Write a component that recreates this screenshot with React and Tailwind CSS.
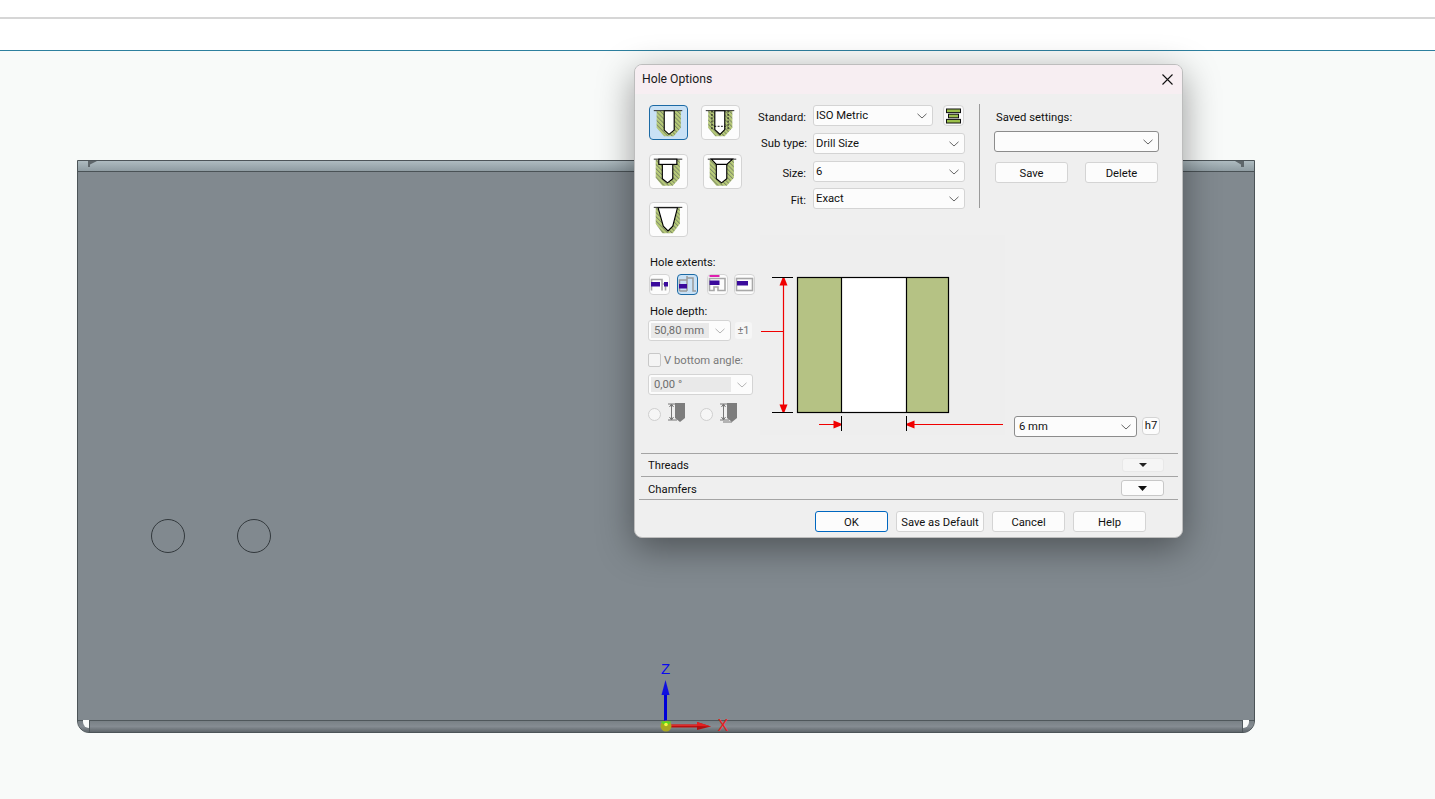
import React from "react";

const font = { fontFamily: 'Roboto, "Noto Sans", sans-serif' };

function Chevron({ light }) {
  return (
    <svg width="10" height="6" viewBox="0 0 10 6" className="shrink-0">
      <path d="M0.5 0.8 L5 5 L9.5 0.8" fill="none" stroke={light ? "#b4b4b4" : "#666"} strokeWidth="1" />
    </svg>
  );
}

function Select({ value, className = "", dark, disabled }) {
  const border = dark ? "border-[#8c8c8c]" : "border-[#d4d4d4]";
  return (
    <div className={`flex items-center justify-between rounded-[3px] border ${border} bg-[#fcfcfc] pl-[2px] pr-[5px] h-[21px] ${className}`}>
      {disabled ? (
        <span className="flex items-center flex-1 h-[15px] mr-[6px] bg-[#e9e9e9] pl-[3px] text-[#6e6e6e]">{value}</span>
      ) : (
        <span className="pt-px text-[#111]">{value}</span>
      )}
      <Chevron light={disabled} />
    </div>
  );
}

function Btn({ children, className = "" }) {
  return (
    <button className={`flex items-center justify-center h-[21px] pt-[2px] rounded-[3px] border border-[#d4d4d4] bg-[#fcfcfc] text-[#111] ${className}`}>
      {children}
    </button>
  );
}

function HoleBody({ id, body, white, children, top }) {
  return (
    <svg width="39" height="35" viewBox="0 0 39 35" className="block">
      <defs>
        <pattern id={id} width="3.2" height="3.2" patternUnits="userSpaceOnUse" patternTransform="rotate(-45)">
          <rect width="3.2" height="3.2" fill="#b8cc78" />
          <rect width="1" height="3.2" fill="#7d8868" />
        </pattern>
      </defs>
      <polygon points={body} fill={`url(#${id})`} />
      <polygon points={white} fill="#fff" stroke="#000" strokeWidth="1.2" />
      <path d={top} stroke="#222" strokeWidth="1" fill="none" />
      {children}
    </svg>
  );
}

function HoleBtn({ active, className = "", children }) {
  return (
    <div className={`w-[39px] h-[35px] rounded-[4px] border ${active ? "border-[#1c6aa5] bg-[#c9e1f5]" : "border-[#d4d4d4] bg-[#fcfcfc]"} ${className} overflow-hidden flex items-center justify-center`}>
      {children}
    </div>
  );
}

function ExtIcon({ children }) {
  return (
    <svg width="19" height="19" viewBox="0 0 19 19" className="block">
      {children}
    </svg>
  );
}

function ExtBtn({ active, children }) {
  return (
    <div className={`w-[21px] h-[21px] rounded-[4px] border ${active ? "border-[#1c6aa5] bg-[#c9e1f5]" : "border-[#d4d4d4] bg-[#fcfcfc]"} flex items-center justify-center`}>
      {children}
    </div>
  );
}

function Bar({ x, y, w }) {
  return (
    <>
      <rect x={x} y={y} width={w} height="4.5" fill="#3a0a9c" />
      <rect x={x} y={y + 1.3} width={w} height="2" fill="#e020b0" />
    </>
  );
}

function Radio() {
  return <div className="w-[13px] h-[13px] mt-[2px] rounded-full border border-[#cfcfcf] bg-[#f6f6f6] shrink-0" />;
}

function DepthIcon({ wide }) {
  return (
    <svg width="18" height="20" viewBox="0 0 18 20" className="block">
      <polygon points="7,0 17,0 17,15 12,19 7,15" fill="#7d7d7d" />
      <path d="M0 1 H7 M0 17 H9 M3.5 1 V17 M1.5 4 L3.5 1 L5.5 4 M1.5 14 L3.5 17 L5.5 14" stroke="#777" strokeWidth="1" fill="none" />
      {wide && <path d="M3 19 H12" stroke="#777" strokeWidth="1" />}
    </svg>
  );
}

function Diagram() {
  const red = "#f00000";
  return (
    <svg width="245" height="200" viewBox="0 0 245 200" className="block shrink-0 bg-[#eeeeee]">
      <rect x="37.5" y="42.5" width="151" height="135" fill="#b5c284" />
      <rect x="81.5" y="42.5" width="65" height="135" fill="#fff" />
      <rect x="37.5" y="42.5" width="151" height="135" fill="none" stroke="#000" strokeWidth="1.2" />
      <path d="M81.5 42 V178 M146.5 42 V178" stroke="#000" strokeWidth="1.2" />
      <path d="M12 42.5 H33 M12 177.5 H33" stroke="#000" strokeWidth="1" />
      <path d="M23.5 43 V177 M1 96.5 H23.5" stroke={red} strokeWidth="1.2" />
      <polygon points="22.5,43 24.5,43 27.5,50.5 19.5,50.5" fill={red} />
      <polygon points="22.5,177 24.5,177 27.5,169.5 19.5,169.5" fill={red} />
      <path d="M81.5 181 V196 M146.5 181 V196" stroke="#000" strokeWidth="1" />
      <path d="M59 189.5 H81 M147 189.5 H243" stroke={red} strokeWidth="1.2" />
      <polygon points="81,188.5 81,190.5 73.5,193.5 73.5,185.5" fill={red} />
      <polygon points="147,188.5 147,190.5 154.5,193.5 154.5,185.5" fill={red} />
    </svg>
  );
}

function Triad() {
  return (
    <svg width="90" height="80" viewBox="0 0 90 80" className="absolute left-[569px] top-[498px]" style={{ overflow: "visible" }}>
      <text x="14" y="15" fontSize="15" fill="#0a0aee" fontFamily="Liberation Sans, sans-serif">Z</text>
      <text x="70.5" y="72" fontSize="16" fill="#e82020" fontFamily="Liberation Sans, sans-serif">X</text>
      <rect x="17" y="35" width="3" height="33" fill="#0000d8" />
      <polygon points="18.5,21 14.5,36 22.5,36" fill="#1010e0" />
      <rect x="19" y="65.5" width="35" height="3" fill="#b81010" />
      <rect x="19" y="65.5" width="35" height="1.4" fill="#e03030" />
      <polygon points="64,67.5 50,63 50,71" fill="#b01010" />
      <polygon points="64,67.5 50,63 50,67" fill="#e52020" />
      <circle cx="19" cy="67" r="5.5" fill="#a8a820" />
      <path d="M13.5 62.5 H24.5 L19 67.5 Z" fill="#58d820" />
      <circle cx="19" cy="65.5" r="1.8" fill="#f4f440" />
    </svg>
  );
}

function Part() {
  return (
    <div className="relative ml-[77px] mt-[109px] w-[1178px] h-[573px] flex flex-col border border-[#4c5458] rounded-b-[12px] overflow-hidden bg-[#82898f]">
      <div className="h-[11px] bg-gradient-to-b from-[#aebbc0] to-[#8f9ca2] border-b border-[#4a5256] shrink-0" />
      <div className="flex-1 bg-[#81898f]" />
      <div className="h-[12px] shrink-0 border-t border-[#4f575b] bg-gradient-to-b from-[#798186] via-[#858c92] to-[#5f666b]" />
      <svg width="1178" height="10" viewBox="0 0 1178 10" className="absolute left-[-1px] top-[-1px]">
        <polygon points="11,1 20,1 13,4.5 13,7 11,7" fill="#5e666a" />
        <polygon points="1167,1 1158,1 1164,4.5 1164,7 1167,7" fill="#5e666a" />
      </svg>
      <div className="absolute left-[5px] bottom-[4px] w-[6px] h-[8px] bg-[#f8faf9] rounded-bl-[6px]" />
      <div className="absolute right-[5px] bottom-[4px] w-[6px] h-[8px] bg-[#f8faf9] rounded-br-[6px]" />
      <div className="absolute left-[11px] bottom-0 w-px h-[12px] bg-[#4f575b]" />
      <div className="absolute right-[11px] bottom-0 w-px h-[12px] bg-[#4f575b]" />
      <div className="absolute left-[73px] top-[358px] w-[34px] h-[34px] rounded-full border border-[#33393d]" />
      <div className="absolute left-[159px] top-[358px] w-[34px] h-[34px] rounded-full border border-[#33393d]" />
      <Triad />
    </div>
  );
}

function Dialog() {
  return (
    <div className="absolute left-[634px] top-[64px] w-[549px] h-[474px] flex flex-col rounded-[8px] border border-[#bdbdbd] bg-[#efefef] overflow-hidden shadow-[0_10px_36px_rgba(0,0,0,0.4)] text-[11.25px] leading-[16px]">
      <div className="flex items-center justify-between h-[29px] shrink-0 bg-[#f7eef2] pl-[7px] pr-[9px] text-[12.2px] text-[#1a1a1a]">
        <span className="mb-[2px]">Hole Options</span>
        <svg width="11" height="11" viewBox="0 0 11 11"><path d="M0.5 0.5 L10.5 10.5 M10.5 0.5 L0.5 10.5" stroke="#111" strokeWidth="1.1" /></svg>
      </div>

      <div className="flex h-[141px] shrink-0 pl-[14px]">
        <div className="flex flex-col w-[93px] pt-[11px] shrink-0">
          <div className="flex gap-[13px]">
            <HoleBtn active>
              <HoleBody id="h1" body="7,5 32.5,5 32.5,23 25,32 15,32 7,23" white="15,5 25.5,5 25.5,25.5 20,30 15,25.5" top="M4 5 H34" />
            </HoleBtn>
            <HoleBtn>
              <HoleBody id="h2" body="6.5,5 32,5 32,23 24,32 14,32 6.5,23" white="13.5,5 24,5 24,25 19,30 13.5,25" top="M4 5 H34">
                <path d="M10.5 5 V26 M27.5 5 V26 M13 21.5 H25" stroke="#000" strokeWidth="1" strokeDasharray="2 1.5" fill="none" />
              </HoleBody>
            </HoleBtn>
          </div>
          <div className="flex gap-[15px] mt-[14px]">
            <HoleBtn>
              <HoleBody id="h3" body="6,5 31.5,5 31.5,24 24,32.5 13,32.5 6,24" white="13,10 24,10 24,25 18.5,29.5 13,25" top="M4 4.5 H34">
                <rect x="9.3" y="4.5" width="19" height="5.5" fill="#fff" stroke="#000" strokeWidth="1.2" />
              </HoleBody>
            </HoleBtn>
            <HoleBtn>
              <HoleBody id="h4" body="6,5 31.5,5 31.5,24 24,32.5 13,32.5 6,24" white="13,10 24,10 24,25 18.5,29.5 13,25" top="M4 4.5 H34">
                <polygon points="7.7,4.5 30,4.5 24,10 13,10" fill="#fff" stroke="#000" strokeWidth="1.2" />
              </HoleBody>
            </HoleBtn>
          </div>
          <div className="flex mt-[13px]">
            <HoleBtn>
              <HoleBody id="h5" body="6,5 31.5,5 31.5,22 24,32 13,32 6,22" white="8.5,5 29,5 24,24.5 19,29.5 14,24.5" top="M4 4.7 H34" />
            </HoleBtn>
          </div>
        </div>

        <div className="flex flex-col w-[215px] ml-[8px] pt-[11px] shrink-0">
          <div className="flex items-center">
            <span className="w-[56px] text-right mr-[7px] shrink-0 text-[#111] mt-[4px]">Standard:</span>
            <Select value="ISO Metric" className="w-[120px]" />
            <div className="ml-[10px] w-[21px] h-[21px] rounded-[4px] border border-[#d4d4d4] bg-[#fafafa] flex items-center justify-center">
              <svg width="15" height="16" viewBox="0 0 15 16">
                <rect x="0.5" y="1" width="14" height="3.6" fill="#9bc04a" stroke="#111" strokeWidth="1" />
                <rect x="2.5" y="6.2" width="10" height="3.6" fill="#9bc04a" stroke="#111" strokeWidth="1" />
                <rect x="0.5" y="11.4" width="14" height="3.6" fill="#9bc04a" stroke="#111" strokeWidth="1" />
              </svg>
            </div>
          </div>
          <div className="flex items-center mt-[7px]">
            <span className="w-[57px] text-right mr-[6px] shrink-0 text-[#111] mt-[1px]">Sub type:</span>
            <Select value="Drill Size" className="w-[152px]" />
          </div>
          <div className="flex items-center mt-[7px]">
            <span className="w-[56px] text-right mr-[7px] shrink-0 text-[#111] mt-[4px]">Size:</span>
            <Select value="6" className="w-[152px]" />
          </div>
          <div className="flex items-center mt-[6px]">
            <span className="w-[56px] text-right mr-[7px] shrink-0 text-[#111] mt-[4px]">Fit:</span>
            <Select value="Exact" className="w-[152px]" />
          </div>
        </div>

        <div className="w-px h-[104px] bg-[#9a9a9a] mt-[10px] ml-[14px] shrink-0" />

        <div className="flex flex-col ml-[14px] w-[165px] pt-[16px] shrink-0">
          <span className="pl-[2px] text-[#111]">Saved settings:</span>
          <Select value="" dark className="w-[165px] mt-[5px]" />
          <div className="flex mt-[10px] pl-[1px] gap-[17px]">
            <Btn className="w-[73px]">Save</Btn>
            <Btn className="w-[73px]">Delete</Btn>
          </div>
        </div>
      </div>

      <div className="flex h-[218px] shrink-0 pl-[13px]">
        <div className="flex flex-col w-[105px] pt-[20px] shrink-0">
          <span className="pl-[2px] text-[#111]">Hole extents:</span>
          <div className="flex mt-[3px] pl-[1px]">
            <ExtBtn>
              <ExtIcon>
                <path d="M1.5 15.5 V4.5 H12 V15.5 M12 9 H15.5 V15.5" fill="none" stroke="#a8a8a8" strokeWidth="1.6" />
                <Bar x="1" y="7" w="9" />
                <Bar x="14" y="7" w="4" />
              </ExtIcon>
            </ExtBtn>
            <div className="ml-[7px]">
              <ExtBtn active>
                <ExtIcon>
                  <path d="M1.5 16 V5 H9 V1 M9 16 H1.5 M9 16 V3 H15 V16 H18" fill="none" stroke="#9a9a9a" strokeWidth="1.5" />
                  <Bar x="1" y="9" w="8" />
                </ExtIcon>
              </ExtBtn>
            </div>
            <div className="ml-[9px]">
              <ExtBtn>
                <ExtIcon>
                  <path d="M1.5 3.5 H17 V15.5 H10 V12 H6 V15.5 H1.5 Z" fill="none" stroke="#a8a8a8" strokeWidth="1.6" />
                  <Bar x="1.5" y="5.5" w="10" />
                </ExtIcon>
              </ExtBtn>
            </div>
            <div className="ml-[6px]">
              <ExtBtn>
                <ExtIcon>
                  <rect x="1.5" y="3.5" width="16" height="12" fill="none" stroke="#a8a8a8" strokeWidth="1.6" />
                  <Bar x="2" y="6" w="11" />
                </ExtIcon>
              </ExtBtn>
            </div>
          </div>
          <span className="pl-[2px] mt-[9px] text-[#111]">Hole depth:</span>
          <div className="flex items-center">
            <Select value="50,80 mm" disabled className="w-[83px]" />
            <div className="ml-[4px] w-[17px] h-[17px] rounded-[3px] bg-[#f6f6f6] flex items-center justify-center text-[#777] text-[11px]">±1</div>
          </div>
          <div className="flex items-center mt-[12px] h-[14px]">
            <div className="w-[13px] h-[14px] rounded-[2px] border border-[#c8c8c8] bg-[#f4f4f4]" />
            <span className="ml-[3px] mt-[2px] text-[#7a7a7a]">V bottom angle:</span>
          </div>
          <Select value="0,00 °" disabled className="w-[105px] mt-[7px]" />
          <div className="flex items-center mt-[8px] h-[20px]">
            <Radio />
            <div className="ml-[7px]"><DepthIcon /></div>
            <div className="ml-[14px]"><Radio /></div>
            <div className="ml-[7px]"><DepthIcon wide /></div>
          </div>
        </div>
        <div className="ml-[7px]"><Diagram /></div>
        <div className="flex items-start ml-[9px] mt-[181px]">
          <Select value="6 mm" dark className="w-[123px] !pl-[4px]" />
          <div className="ml-[5px] mt-[1px] w-[18px] h-[18px] rounded-[4px] border border-[#d4d4d4] bg-[#fcfcfc] flex items-center justify-center text-[#111]">h7</div>
        </div>
      </div>

      <div className="flex items-center justify-between h-[23px] shrink-0 ml-[6px] w-[537px] border-t border-[#a4a4a4] pl-[7px] pr-[14px]">
        <span className="text-[#111] mt-[2px]">Threads</span>
        <div className="w-[42px] h-[14px] rounded-[3px] border border-[#e8e8e8] bg-[#f5f5f5] flex items-center justify-center">
          <svg width="8" height="4" viewBox="0 0 8 4"><polygon points="0,0 8,0 4,4" fill="#222" /></svg>
        </div>
      </div>
      <div className="flex items-center justify-between h-[23px] shrink-0 ml-[6px] w-[537px] border-t border-[#a4a4a4] pl-[7px] pr-[14px]">
        <span className="text-[#111] mt-[4px]">Chamfers</span>
        <div className="w-[43px] h-[16px] rounded-[3px] border border-[#c8c8c8] bg-[#fcfcfc] flex items-center justify-center">
          <svg width="9" height="5" viewBox="0 0 9 5"><polygon points="0,0 9,0 4.5,5" fill="#111" /></svg>
        </div>
      </div>
      <div className="h-px shrink-0 ml-[4px] w-[539px] bg-[#a4a4a4]" />
      <div className="flex mt-[11px] pl-[180px] gap-[8px]">
        <Btn className="w-[73px] !border-[#0067c0]">OK</Btn>
        <Btn className="w-[88px]">Save as Default</Btn>
        <Btn className="w-[73px]">Cancel</Btn>
        <Btn className="w-[73px]">Help</Btn>
      </div>
    </div>
  );
}

export default function App() {
  return (
    <div className="relative w-[1435px] h-[799px] overflow-hidden bg-white" style={font}>
      <div className="h-[17px] bg-white" />
      <div className="h-[2px] bg-[#d6d6d6]" />
      <div className="h-[31px] bg-white" />
      <div className="h-px bg-[#2d7f9e]" />
      <div className="h-[748px] bg-[#f8faf9] overflow-hidden">
        <Part />
      </div>
      <Dialog />
    </div>
  );
}
